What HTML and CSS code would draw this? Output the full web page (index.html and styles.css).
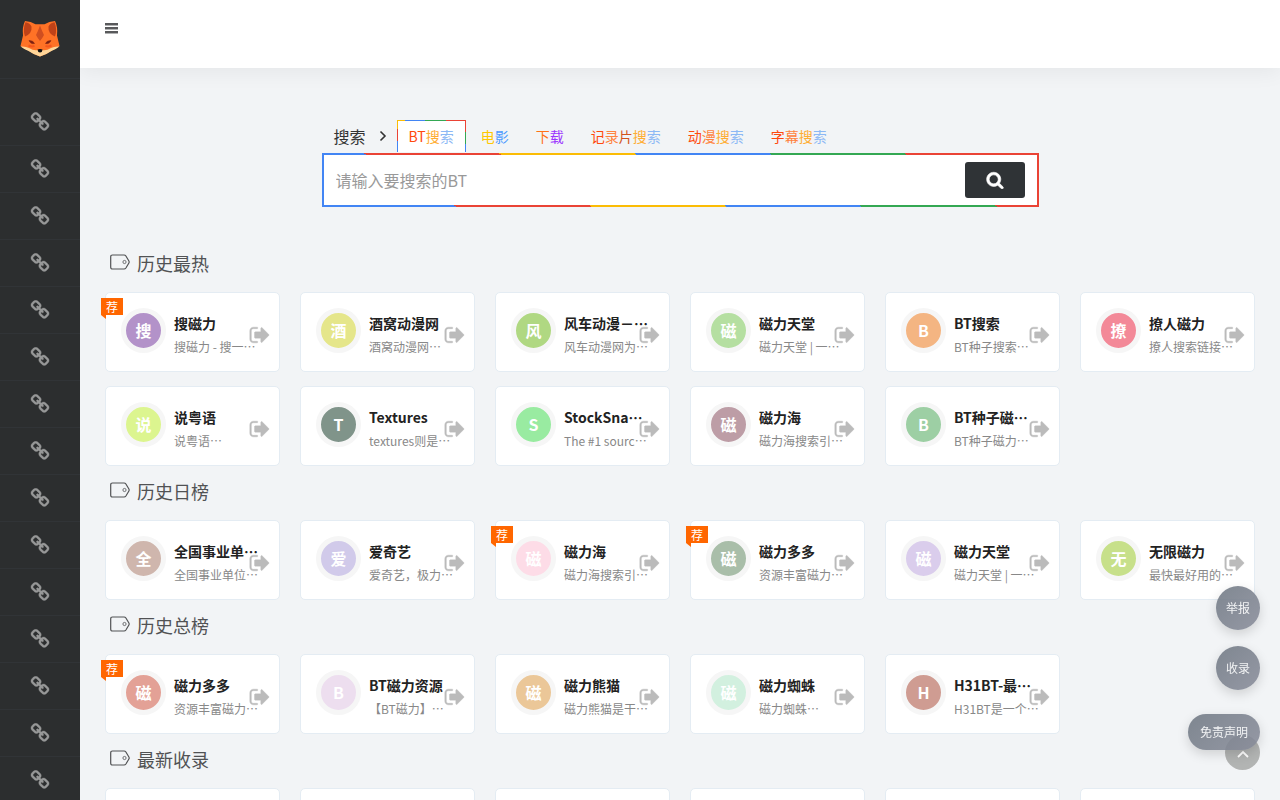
FILE: index.html
```html
<!DOCTYPE html>
<html lang="zh-CN">

<head>
    <meta charset="UTF-8">
    <meta name="viewport" content="width=device-width, initial-scale=1.0">
    <title>磁力导航</title>
    <link rel="stylesheet" href="styles.css">
</head>

<body>
    <!-- Icon set -->
    <svg class="icon-set" aria-hidden="true">
        <symbol id="icon-link" viewBox="0 0 1792 1792">
            <path d="M1520 1216q0-40-28-68l-208-208q-28-28-68-28-42 0-72 32 3 3 19 18.500t21.500 21.500 15 19 13 25.500 3.500 27.500q0 40-28 68t-68 28q-15 0-27.500-3.500t-25.500-13-19-15-21.500-21.500-18.500-19q-33 31-33 73 0 40 28 68l206 207q27 27 68 27 40 0 68-26l147-146q28-28 28-67zm-703-705q0-40-28-68l-206-207q-28-28-68-28-39 0-68 27l-147 146q-28 28-28 67 0 40 28 68l208 208q27 27 68 27 42 0 72-31-3-3-19-18.500t-21.500-21.500-15-19-13-25.500-3.500-27.500q0-40 28-68t68-28q15 0 27.500 3.500t25.500 13 19 15 21.500 21.500 18.500 19q33-31 33-73zm895 705q0 120-85 203l-147 146q-83 83-203 83-121 0-204-85l-206-207q-83-83-83-203 0-123 88-209l-88-88q-86 88-208 88-120 0-204-84l-208-208q-84-84-84-204t85-203l147-146q83-83 203-83 121 0 204 85l206 207q83 83 83 203 0 123-88 209l88 88q86-88 208-88 120 0 204 84l208 208q84 84 84 204z" />
        </symbol>
        <symbol id="icon-go" viewBox="0 0 1792 1792">
            <path d="M704 1440q0 4 1 20t.5 26.500-3 23.500-10 19.500-20.500 6.500h-320q-119 0-203.500-84.500t-84.500-203.500v-704q0-119 84.500-203.500t203.500-84.500h320q13 0 22.500 9.500t9.500 22.500q0 4 1 20t.5 26.500-3 23.500-10 19.500-20.500 6.500h-320q-66 0-113 47t-47 113v704q0 66 47 113t113 47h312l11.500 1 11.500 3 8 5.500 7 9 2 13.500zm928-544q0 26-19 45l-544 544q-19 19-45 19t-45-19-19-45v-288h-448q-26 0-45-19t-19-45v-384q0-26 19-45t45-19h448v-288q0-26 19-45t45-19 45 19l544 544q19 19 19 45z" />
        </symbol>
        <symbol id="icon-search" viewBox="0 0 1792 1792">
            <path d="M1216 832q0-185-131.500-316.500t-316.500-131.500-316.500 131.500-131.500 316.500 131.500 316.500 316.500 131.500 316.500-131.500 131.500-316.500zm512 832q0 52-38 90t-90 38q-54 0-90-38l-343-342q-179 124-399 124-143 0-273.500-55.500t-225-150-150-225-55.500-273.500 55.500-273.500 150-225 225-150 273.500-55.500 273.500 55.500 225 150 150 225 55.500 273.500q0 220-124 399l343 343q37 37 37 90z" />
        </symbol>
        <symbol id="icon-tag" viewBox="0 0 22 16">
            <path d="M3.500 1h11.500q1.200 0 1.900 1l3 5q.6 1 0 2l-3 5q-.7 1-1.900 1H3.500q-1.800 0-1.800-1.800V2.800Q1.700 1 3.500 1z" fill="none" stroke="currentColor" stroke-width="1.200" />
            <circle cx="15.500" cy="8" r="1.600" fill="none" stroke="currentColor" stroke-width=".8" />
        </symbol>
    </svg>

    <aside class="sidebar">
        <a class="logo" href="#" aria-label="首页">
            <svg viewBox="0 0 40 36">
                <path d="M5 0q6 .5 10.500 3.200h9Q29 .5 35 0q3 6 2 14.500l2.500 10.500q-4 3-8 4.500-5 4-11.500 6-6.500-2-11.500-6-4-1.500-8-4.500L3 14.500Q2 6 5 0z" fill="#ff7226" />
                <path d="M5.500 1.200q4 .5 6 4.300.8 7-6.500 10-2.500-7 .5-14.300zM34.500 1.200q-4 .5-6 4.300-.8 7 6.500 10 2.500-7-.5-14.300z" fill="#bf4218" />
                <path d="M20 4.500q2 5.500 4 9.500-1.500 3-4 6-2.500-3-4-6 2-4 4-9.500z" fill="#cf4e20" />
                <path d="M8.500 24.500q3 1.500 6 .5M31.500 24.500q-3 1.500-6 .5" fill="none" stroke="#f4561e" stroke-width="2" />
                <path d="M.5 25.500q5-.5 8.500 1.500 4 2.500 7.500 2.200h7Q27 29.500 31 27q3.500-2 8.500-1.500-4 3-8 4.500-5 3.500-11.500 5.500-6.500-2-11.500-5.500-4-1.500-8-4.500z" fill="#ffd699" />
                <path d="M9 19.500q4.500 0 5.500 3-4 .8-5.500-3zM31 19.500q-4.500 0-5.500 3 4 .8 5.500-3z" fill="#7a1f12" stroke="#8c2a14" stroke-width=".6" />
                <path d="M17.500 28.500q2.500-1 5 0 0 2.500-2.500 3-2.500-.5-2.500-3z" fill="#111" />
            </svg>
        </a>
        <nav class="side-menu" id="sideMenu"></nav>
    </aside>

    <div class="main">
        <header class="topbar">
            <button class="menu-toggle" type="button" aria-label="菜单">
                <span></span><span></span><span></span>
            </button>
        </header>

        <form class="search">
            <div class="search-tabs">
                <span class="search-title">搜索</span>
                <svg class="chevron" viewBox="0 0 8 12"><path d="M1.500 1.500L6 6l-4.500 4.500" fill="none" stroke="#333" stroke-width="1.600" /></svg>
                <a class="tab active" href="#"><i class="red">BT</i><i class="amber">搜</i><i class="sky">索</i></a>
                <a class="tab" href="#"><i class="yellow">电</i><i class="blue">影</i></a>
                <a class="tab" href="#"><i class="orange">下</i><i class="purple">载</i></a>
                <a class="tab" href="#"><i class="red">记</i><i class="coral">录</i><i class="brown">片</i><i class="amber">搜</i><i class="sky">索</i></a>
                <a class="tab" href="#"><i class="red">动</i><i class="coral">漫</i><i class="amber">搜</i><i class="sky">索</i></a>
                <a class="tab" href="#"><i class="red">字</i><i class="coral">幕</i><i class="amber">搜</i><i class="sky">索</i></a>
            </div>
            <div class="search-box">
                <input type="text" placeholder="请输入要搜索的BT" aria-label="搜索">
                <button type="submit" aria-label="搜索"><svg><use href="#icon-search" /></svg></button>
            </div>
        </form>

        <main class="content" id="content"></main>
    </div>

    <!-- Floating buttons -->
    <button class="to-top" type="button" aria-label="返回顶部">
        <svg viewBox="0 0 12 8"><path d="M1 7l5-5 5 5" fill="none" stroke="#fff" stroke-width="1.800" /></svg>
    </button>
    <div class="floating">
        <a class="round" href="#">举报</a>
        <a class="round" href="#">收录</a>
        <a class="pill" href="#">免责声明</a>
    </div>

    <script src="script.js"></script>
</body>

</html>
```
FILE: styles.css
```css
* {
    box-sizing: border-box;
}

body {
    margin: 0;
    background: #f2f4f6;
    color: #515254;
    font-family: "Noto Sans CJK SC", "Noto Sans", sans-serif;
    font-size: 14px;
}

a {
    color: inherit;
    text-decoration: none;
}

.icon-set {
    display: none;
}

/* Sidebar */
.sidebar {
    position: fixed;
    top: 0;
    bottom: 0;
    left: 0;
    width: 80px;
    overflow: hidden;
    background: #2c2e2f;
    z-index: 3;
}

.logo {
    display: flex;
    height: 79px;
    align-items: center;
    justify-content: center;
    border-bottom: 1px solid #313437;
}

.logo svg {
    width: 40px;
    height: 36px;
}

.side-menu {
    padding-top: 20px;
}

.side-menu a {
    display: flex;
    height: 47px;
    align-items: center;
    justify-content: center;
    border-bottom: 1px solid #313437;
    color: #979898;
}

.side-menu svg {
    width: 20px;
    height: 20px;
    fill: currentColor;
    stroke: currentColor;
    stroke-width: 30;
}

/* Top bar */
.main {
    margin-left: 80px;
}

.topbar {
    display: flex;
    height: 68px;
    padding: 23px 25px;
    background: #fff;
    box-shadow: 0 4px 20px rgba(0, 0, 0, 0.06);
}

.menu-toggle {
    display: flex;
    flex-direction: column;
    justify-content: space-between;
    width: 13px;
    height: 11px;
    padding: 0;
    border: 0;
    background: none;
}

.menu-toggle span {
    width: 13px;
    height: 3px;
    border-bottom: 1px solid #b0b1b2;
    background: #58595b;
}

/* Search */
.search {
    max-width: 717px;
    margin: 52px auto 31px;
}

.search-tabs {
    display: flex;
    align-items: center;
    gap: 1px;
    height: 33px;
    padding: 0 12px 1px;
}

.search-title {
    color: #333;
    font-size: 16px;
    line-height: 22px;
}

.chevron {
    width: 8px;
    height: 12px;
    margin: 0 9px 0 12px;
}

.tab {
    height: 32px;
    padding: 0 11px;
    border: 2px solid transparent;
    border-width: 1px 2px 0;
    line-height: 30px;
    white-space: nowrap;
}

.tab.active {
    margin-right: 1px;
    border-width: 1px 1px 0;
    background: #fff;
    border-image: linear-gradient(30deg, #4285f4 16.66%, #ea4335 16.66% 33.33%, #fbbc05 33.33% 50%, #4285f4 50% 66.66%, #34a853 66.66% 83.33%, #ea4335 83.33%) 1;
}

.tab i {
    font-style: normal;
}

.red { color: #ff4a0d; }
.coral { color: #ff8340; }
.brown { color: #d2541b; }
.amber { color: #ffad33; }
.sky { color: #8cb8f5; }
.yellow { color: #ffc800; }
.blue { color: #4d9aff; }
.orange { color: #ff7216; }
.purple { color: #9b35ff; }

.search-box {
    display: flex;
    align-items: center;
    height: 54px;
    padding: 0 12px;
    border: 2px solid;
    background: #fff;
    border-image: linear-gradient(30deg, #4285f4 16.66%, #ea4335 16.66% 33.33%, #fbbc05 33.33% 50%, #4285f4 50% 66.66%, #34a853 66.66% 83.33%, #ea4335 83.33%) 2;
}

.search-box input {
    flex: 1;
    min-width: 0;
    height: 50px;
    padding: 0;
    border: 0;
    outline: none;
    background: none;
    font-family: inherit;
    font-size: 16px;
}

.search-box input::placeholder {
    color: #999;
}

.search-box button {
    display: flex;
    align-items: center;
    justify-content: center;
    width: 60px;
    height: 36px;
    border: 0;
    border-radius: 3px;
    background: #2f3336;
}

.search-box button svg {
    width: 18px;
    height: 18px;
    fill: #fff;
    stroke: #fff;
    stroke-width: 60;
}

/* Site lists */
.content {
    padding: 0 25px 40px;
}

.section-title {
    display: flex;
    align-items: center;
    gap: 6px;
    height: 54px;
    margin: 0;
    padding: 0 4px 4px;
    font-size: 18px;
    font-weight: 400;
    line-height: 26px;
}

.section-title svg {
    width: 22px;
    height: 16px;
    margin-bottom: 2px;
}

.cards {
    display: grid;
    grid-template-columns: repeat(6, minmax(0, 1fr));
    gap: 14px 20px;
}

.card {
    position: relative;
    display: flex;
    gap: 8px;
    height: 80px;
    padding: 15px;
    border: 1px solid #e4ecf3;
    border-radius: 5px;
    background: #fff;
}

.avatar {
    flex: none;
    width: 45px;
    height: 45px;
    border: 5px solid #f6f6f6;
    border-radius: 50%;
    color: #fff;
    font-size: 16px;
    font-weight: 700;
    line-height: 34px;
    text-align: center;
}

.card-text {
    min-width: 0;
    padding-top: 5px;
    white-space: nowrap;
}

.card-text strong {
    display: block;
    color: #222;
    font-size: 14px;
    line-height: 20px;
}

.card-text p {
    margin: 0;
    color: #888;
    font-size: 12px;
    line-height: 28px;
}

.go {
    position: absolute;
    top: 31px;
    right: 8px;
    width: 22px;
    height: 22px;
    fill: #bbb;
    stroke: #bbb;
    stroke-width: 30;
}

.badge {
    position: absolute;
    top: 5px;
    left: -5px;
    width: 22px;
    height: 17px;
    background: #ff6600;
    color: #fff;
    font-size: 12px;
    line-height: 17px;
    text-align: center;
}

.badge::after {
    content: '';
    position: absolute;
    top: 17px;
    left: 0;
    border-top: 4px solid #ff6600;
    border-left: 5px solid transparent;
}

/* Floating buttons */
.floating {
    position: fixed;
    right: 20px;
    bottom: 50px;
    display: flex;
    flex-direction: column;
    align-items: flex-end;
    z-index: 5;
}

.floating a {
    background: linear-gradient(135deg, rgba(110, 119, 130, 0.88), rgba(135, 139, 153, 0.88));
    box-shadow: 0 4px 12px rgba(0, 0, 0, 0.15);
    color: #f3f4f5;
    font-size: 12px;
    text-align: center;
}

.round {
    width: 44px;
    height: 44px;
    margin-bottom: 16px;
    border-radius: 50%;
    line-height: 44px;
}

.pill {
    margin-top: 8px;
    padding: 0 12px;
    border-radius: 18px;
    line-height: 36px;
}

.to-top {
    position: fixed;
    right: 20px;
    bottom: 30px;
    width: 35px;
    height: 35px;
    padding: 2px 0 0;
    border: 0;
    border-radius: 50%;
    background: rgba(90, 90, 85, 0.42);
    z-index: 4;
}

.to-top svg {
    width: 12px;
    height: 8px;
}
```
FILE: script.js
```js
// [name, description, letter, colour, recommended]
const sections = [
    {
        title: '历史最热',
        sites: [
            ['搜磁力', '搜磁力 - 搜一…', '搜', '#b392c9', true],
            ['酒窝动漫网', '酒窝动漫网…', '酒', '#e5e68a'],
            ['风车动漫－…', '风车动漫网为…', '风', '#b0d882'],
            ['磁力天堂', '磁力天堂 | 一…', '磁', '#b5dfa1'],
            ['BT搜索', 'BT种子搜索…', 'B', '#f4b582'],
            ['撩人磁力', '撩人搜索链接…', '撩', '#f38998'],
            ['说粤语', '说粤语…', '说', '#dcf58f'],
            ['Textures', 'textures则是…', 'T', '#80948a'],
            ['StockSna…', 'The #1 sourc…', 'S', '#99eba1'],
            ['磁力海', '磁力海搜索引…', '磁', '#bd9da6'],
            ['BT种子磁…', 'BT种子磁力…', 'B', '#9dcfa4']
        ]
    },
    {
        title: '历史日榜',
        sites: [
            ['全国事业单…', '全国事业单位…', '全', '#cfb6ad'],
            ['爱奇艺', '爱奇艺，极力…', '爱', '#d1caea'],
            ['磁力海', '磁力海搜索引…', '磁', '#fddce7', true],
            ['磁力多多', '资源丰富磁力…', '磁', '#a9bea9', true],
            ['磁力天堂', '磁力天堂 | 一…', '磁', '#dacdec'],
            ['无限磁力', '最快最好用的…', '无', '#c7e08a']
        ]
    },
    {
        title: '历史总榜',
        sites: [
            ['磁力多多', '资源丰富磁力…', '磁', '#e3a196', true],
            ['BT磁力资源', '【BT磁力】…', 'B', '#eddeef'],
            ['磁力熊猫', '磁力熊猫是干…', '磁', '#ebc798'],
            ['磁力蜘蛛', '磁力蜘蛛…', '磁', '#d2f0df'],
            ['H31BT-最…', 'H31BT是一个…', 'H', '#cf9c92']
        ]
    },
    // newest sites are not loaded yet, show empty cards
    {
        title: '最新收录',
        placeholders: 6
    }
];

function card([name, desc, letter, color, recommended]) {
    return `<a class="card" href="#">
        ${recommended ? '<span class="badge">荐</span>' : ''}
        <span class="avatar" style="background-color: ${color}">${letter}</span>
        <div class="card-text"><strong>${name}</strong><p>${desc}</p></div>
        <svg class="go"><use href="#icon-go" /></svg>
    </a>`;
}

function cards(section) {
    if (section.placeholders) {
        return '<div class="card"></div>'.repeat(section.placeholders);
    }
    return section.sites.map(card).join('');
}

document.getElementById('content').innerHTML = sections.map(section => `
    <section>
        <h2 class="section-title"><svg><use href="#icon-tag" /></svg>${section.title}</h2>
        <div class="cards">${cards(section)}</div>
    </section>`).join('');

document.getElementById('sideMenu').innerHTML = Array.from({ length: 16 }, () =>
    '<a href="#" aria-label="分类"><svg><use href="#icon-link" /></svg></a>').join('');
```
